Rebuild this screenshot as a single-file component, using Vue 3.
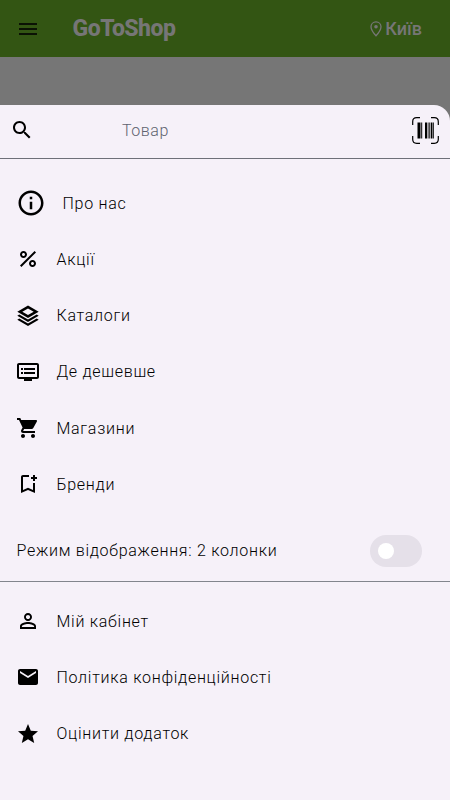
<script setup>
const mainItems = [
  { label: 'Про нас', large: true, path: 'M11 7h2v2h-2zm0 4h2v6h-2zm1-9C6.48 2 2 6.48 2 12s4.48 10 10 10 10-4.48 10-10S17.52 2 12 2zm0 18c-4.41 0-8-3.59-8-8s3.59-8 8-8 8 3.59 8 8-3.59 8-8 8z' },
  { label: 'Акції', path: 'M7.5 11C9.43 11 11 9.43 11 7.5S9.43 4 7.5 4 4 5.57 4 7.5 5.57 11 7.5 11zm0-5C8.33 6 9 6.67 9 7.5S8.33 9 7.5 9 6 8.33 6 7.5 6.67 6 7.5 6zM4.003 18.583 18.59 3.996l1.414 1.414L5.417 19.997zM16.5 13c-1.93 0-3.5 1.57-3.5 3.5s1.57 3.5 3.5 3.5 3.5-1.57 3.5-3.5-1.57-3.5-3.5-3.5zm0 5c-.83 0-1.5-.67-1.5-1.5s.67-1.5 1.5-1.5 1.5.67 1.5 1.5-.67 1.5-1.5 1.5z' },
  { label: 'Каталоги', path: 'M12 1.6 1.300 7.800 12 14 22.700 7.800zM12 4.500 17.700 7.800 12 11.100 6.300 7.800zM3.300 10.500 1.300 11.700 12 17.900 22.700 11.700l-2-1.200L12 15.500zM3.300 14.500l-2 1.200L12 21.900l10.700-6.200-2-1.200L12 19.500z' },
  { label: 'Де дешевше', path: 'M21 3H3c-1.1 0-2 .9-2 2v12c0 1.1.9 2 2 2h5v2h8v-2h5c1.1 0 1.99-.9 1.99-2L23 5c0-1.1-.9-2-2-2zm0 14H3V5h18v12zm-2-9H8v2h11V8zm0 4H8v2h11v-2zM7 8H5v2h2V8zm0 4H5v2h2v-2z' },
  { label: 'Магазини', path: 'M7 18c-1.1 0-1.99.9-1.99 2S5.9 22 7 22s2-.9 2-2-.9-2-2-2zM1 2v2h2l3.6 7.59-1.35 2.45c-.16.28-.25.61-.25.96 0 1.1.9 2 2 2h12v-2H7.42c-.14 0-.25-.11-.25-.25l.03-.12.9-1.63h7.45c.75 0 1.41-.41 1.75-1.03l3.58-6.49c.08-.14.12-.31.12-.48 0-.55-.45-1-1-1H5.21l-.94-2H1zm16 16c-1.1 0-1.99.9-1.99 2s.89 2 1.99 2 2-.9 2-2-.9-2-2-2z' },
  { label: 'Бренди', path: 'M17 11v6.97l-5-2.14-5 2.14V5h6V3H7c-1.1 0-2 .9-2 2v16l7-3 7 3V11h-2zm4-4h-2v2h-2V7h-2V5h2V3h2v2h2v2z' },
]

const accountItems = [
  { label: 'Мій кабінет', path: 'M12 5.9c1.16 0 2.1.94 2.1 2.1s-.94 2.1-2.1 2.1S9.9 9.16 9.9 8s.94-2.1 2.1-2.1m0 9c2.97 0 6.1 1.46 6.1 2.1v1.1H5.9V17c0-.64 3.13-2.1 6.1-2.1M12 4C9.79 4 8 5.79 8 8s1.79 4 4 4 4-1.79 4-4-1.79-4-4-4zm0 9c-2.67 0-8 1.34-8 4v3h16v-3c0-2.66-5.33-4-8-4z' },
  { label: 'Політика конфіденційності', path: 'M20 4H4c-1.1 0-1.99.9-1.99 2L2 18c0 1.1.9 2 2 2h16c1.1 0 2-.9 2-2V6c0-1.1-.9-2-2-2zm0 4-8 5-8-5V6l8 5 8-5v2z' },
  { label: 'Оцінити додаток', path: 'M12 17.27 18.18 21l-1.64-7.03L22 9.24l-7.19-.61L12 2 9.19 8.63 2 9.24l5.46 4.73L5.82 21z' },
]
</script>

<template>
  <div class="screen">
    <header class="bar">
      <svg class="burger" viewBox="0 0 24 24"><path d="M3 18h18v-2H3v2zm0-5h18v-2H3v2zm0-7v2h18V6H3z" /></svg>
      <span class="brand">GoToShop</span>
      <span class="city">
        <svg class="pin" viewBox="0 0 12 16">
          <path d="M6 .9C3.1.9 1 3.1 1 5.8 1 9.400 6 14.800 6 14.800S11 9.400 11 5.800C11 3.100 8.900.9 6 .9z" fill="none" stroke="currentColor" stroke-width="1.3" />
          <circle cx="6" cy="5.800" r="1.800" />
        </svg>
        <span>Київ</span>
      </span>
    </header>
    <aside class="drawer">
      <div class="search">
        <svg class="icon" viewBox="0 0 24 24"><path d="M15.500 14h-.79l-.28-.27C15.410 12.590 16 11.110 16 9.500 16 5.910 13.090 3 9.500 3S3 5.910 3 9.500 5.910 16 9.500 16c1.610 0 3.090-.59 4.230-1.570l.27.28v.79l5 4.990L20.490 19l-4.990-5zm-6 0C7.010 14 5 11.990 5 9.500S7.010 5 9.500 5 14 7.010 14 9.500 11.990 14 9.500 14z" /></svg>
        <span class="hint">Товар</span>
        <svg class="barcode" viewBox="0 0 27 27">
          <path d="M.7 8V4.700q0-4 4-4H8M19 .7h3.300q4 0 4 4V8M26.300 19v3.300q0 4-4 4H19M8 26.300H4.700q-4 0-4-4V19" fill="none" stroke="#000" stroke-width="1.200" />
          <path d="M5.500 5.500h3v16h-3zM9.200 5.500h1v16h-1zM13 5.500h2.300v16H13zM16.500 5.500h1.200v16h-1.200zM18.700 5.500h1.800v16h-1.800zM21 5.500h.8v16H21z" />
        </svg>
      </div>
      <nav class="menu">
        <div v-for="item in mainItems" :key="item.label" class="row">
          <svg class="icon" :class="{ large: item.large }" viewBox="0 0 24 24"><path fill-rule="evenodd" :d="item.path" /></svg>
          <span>{{ item.label }}</span>
        </div>
      </nav>
      <div class="mode">
        <span>Режим відображення: 2 колонки</span>
        <span class="switch"><span class="thumb"></span></span>
      </div>
      <nav class="menu account">
        <div v-for="item in accountItems" :key="item.label" class="row">
          <svg class="icon" viewBox="0 0 24 24"><path fill-rule="evenodd" :d="item.path" /></svg>
          <span>{{ item.label }}</span>
        </div>
      </nav>
    </aside>
  </div>
</template>

<style>
body { background: #767676; }
</style>

<style scoped>
.screen {
  width: 450px;
  height: 800px;
  overflow: hidden;
  display: flex;
  flex-direction: column;
  gap: 48px;
  background: #767676;
  font-family: Roboto, "Liberation Sans", sans-serif;
  font-size: 16px;
  color: #000;
}
svg { display: block; flex: none; fill: currentColor; }
.bar {
  box-sizing: border-box;
  height: 57px;
  flex: none;
  display: flex;
  align-items: center;
  padding: 0 28px 0 16px;
  background: #335513;
}
.burger { width: 24px; height: 24px; color: #0b1204; }
.brand { margin-left: 32.500px; font-size: 23px; font-weight: 800; letter-spacing: -0.5px; color: #767676; }
.city {
  margin-left: auto;
  display: flex;
  align-items: center;
  gap: 3px;
  font-size: 18px;
  font-weight: 500;
  color: #767676;
}
.pin { width: 12px; height: 16px; }
.drawer {
  flex: 1;
  background: #f6f1f9;
  border-radius: 0 16px 0 0;
  font-weight: 360;
  letter-spacing: 0.72px;
}
.search {
  box-sizing: border-box;
  height: 54px;
  display: flex;
  align-items: center;
  padding: 0 11px 3px 10px;
  border-bottom: 1px solid #6e7079;
}
.hint { margin-left: 88px; letter-spacing: 0.55px; color: #606370; }
.barcode { width: 27px; height: 27px; margin-left: auto; }
.icon { width: 24px; height: 24px; }
.icon.large { width: 30px; height: 30px; }
.menu { padding-top: 16px; }
.row {
  height: 56.250px;
  display: flex;
  align-items: center;
  gap: 16.500px;
  padding-left: 16px;
}
.mode {
  box-sizing: border-box;
  height: 69.500px;
  display: flex;
  align-items: center;
  justify-content: space-between;
  padding: 8px 28px 0 16.500px;
  border-bottom: 1px solid #82858d;
}
.switch {
  box-sizing: border-box;
  width: 52px;
  height: 32px;
  display: flex;
  align-items: center;
  padding-left: 8px;
  border-radius: 16px;
  background: #e5e0e9;
}
.thumb { width: 16px; height: 16px; border-radius: 50%; background: #fff; }
.account { padding-top: 11px; }
</style>
